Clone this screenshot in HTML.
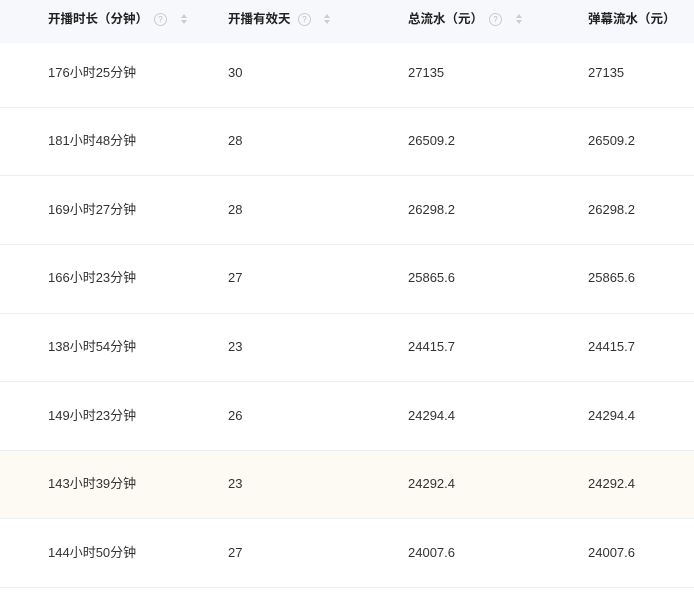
<!DOCTYPE html>
<html><head><meta charset="utf-8"><style>
body{margin:0;width:694px;height:610px;overflow:hidden;background:#fff;font-family:"Liberation Sans","Noto Sans CJK SC",sans-serif;font-size:13px;color:#333;position:relative}
.hd{position:absolute;left:0;top:0;width:694px;height:43px;background:#f7f8fb}
.r{position:absolute;left:0;width:694px;border-bottom:1px solid #ebeef2}
.t{position:absolute;white-space:nowrap;line-height:16px;height:16px;margin-top:1px}
.h{font-weight:bold;color:#222;top:10px;font-size:12.5px}
.q{position:absolute;top:13px;width:11px;height:11px;border:1px solid #ccc;border-radius:50%;font-size:8px;line-height:11px;text-align:center;color:#bbb}
.s{position:absolute;top:14px;width:0;height:0}
.s:before{content:"";position:absolute;left:-3px;top:0;border:3px solid transparent;border-bottom:4px solid #ccc;border-top:0}
.s:after{content:"";position:absolute;left:-3px;top:6px;border:3px solid transparent;border-top:4px solid #ccc;border-bottom:0}
</style></head><body>
<div class="hd">
<div class="t h" style="left:48px">开播时长（分钟）</div><div class="q" style="left:154px">?</div><div class="s" style="left:184px"></div>
<div class="t h" style="left:228px">开播有效天</div><div class="q" style="left:298px">?</div><div class="s" style="left:327px"></div>
<div class="t h" style="left:408px">总流水（元）</div><div class="q" style="left:489px">?</div><div class="s" style="left:519px"></div>
<div class="t h" style="left:588px">弹幕流水（元）</div>
</div>
<div class="r" style="top:43px;height:64px"></div>
<div class="r" style="top:108px;height:67px"></div>
<div class="r" style="top:176px;height:68px"></div>
<div class="r" style="top:245px;height:68px"></div>
<div class="r" style="top:314px;height:67px"></div>
<div class="r" style="top:382px;height:68px"></div>
<div class="r" style="top:451px;height:67px;background:#fdfaf3"></div>
<div class="r" style="top:519px;height:68px"></div>

<div class="t" style="left:48px;top:64px">176小时25分钟</div><div class="t" style="left:228px;top:64px">30</div><div class="t" style="left:408px;top:64px">27135</div><div class="t" style="left:588px;top:64px">27135</div>
<div class="t" style="left:48px;top:132px">181小时48分钟</div><div class="t" style="left:228px;top:132px">28</div><div class="t" style="left:408px;top:132px">26509.2</div><div class="t" style="left:588px;top:132px">26509.2</div>
<div class="t" style="left:48px;top:201px">169小时27分钟</div><div class="t" style="left:228px;top:201px">28</div><div class="t" style="left:408px;top:201px">26298.2</div><div class="t" style="left:588px;top:201px">26298.2</div>
<div class="t" style="left:48px;top:269px">166小时23分钟</div><div class="t" style="left:228px;top:269px">27</div><div class="t" style="left:408px;top:269px">25865.6</div><div class="t" style="left:588px;top:269px">25865.6</div>
<div class="t" style="left:48px;top:338px">138小时54分钟</div><div class="t" style="left:228px;top:338px">23</div><div class="t" style="left:408px;top:338px">24415.7</div><div class="t" style="left:588px;top:338px">24415.7</div>
<div class="t" style="left:48px;top:407px">149小时23分钟</div><div class="t" style="left:228px;top:407px">26</div><div class="t" style="left:408px;top:407px">24294.4</div><div class="t" style="left:588px;top:407px">24294.4</div>
<div class="t" style="left:48px;top:475px">143小时39分钟</div><div class="t" style="left:228px;top:475px">23</div><div class="t" style="left:408px;top:475px">24292.4</div><div class="t" style="left:588px;top:475px">24292.4</div>
<div class="t" style="left:48px;top:544px">144小时50分钟</div><div class="t" style="left:228px;top:544px">27</div><div class="t" style="left:408px;top:544px">24007.6</div><div class="t" style="left:588px;top:544px">24007.6</div>
</body></html>
